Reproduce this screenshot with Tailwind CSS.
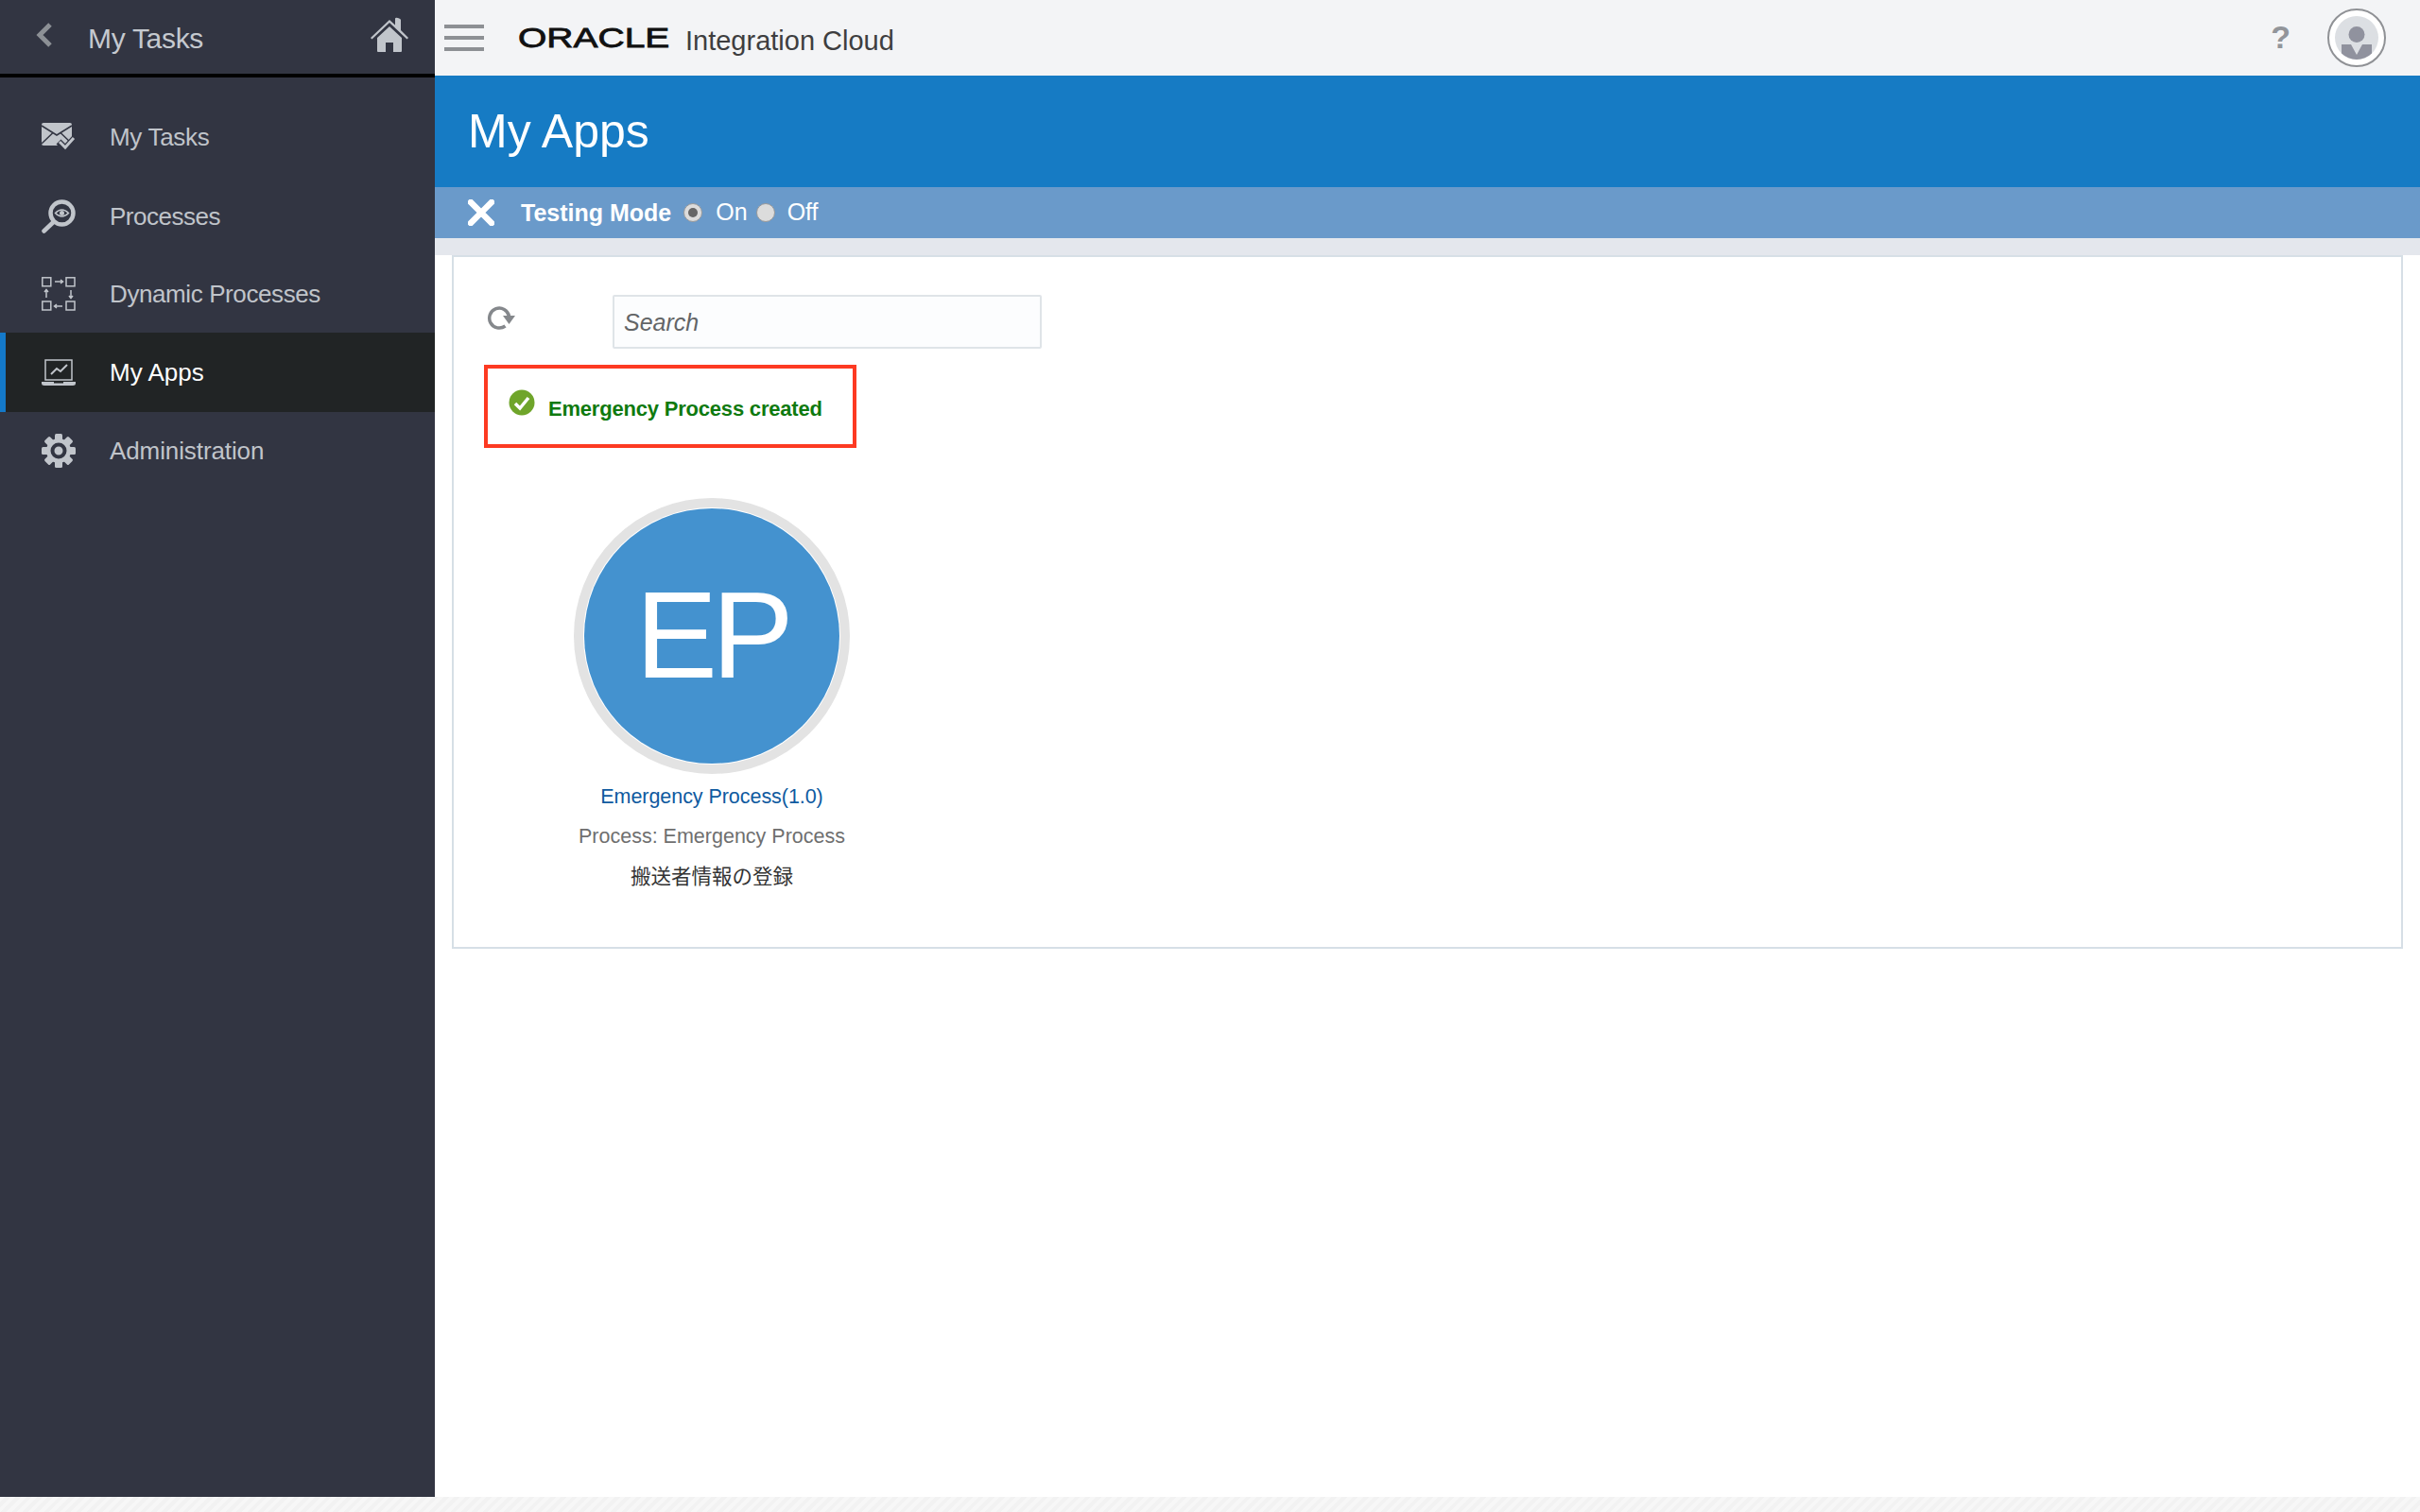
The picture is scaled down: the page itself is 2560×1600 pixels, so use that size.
<!DOCTYPE html>
<html lang="en">
<head>
<meta charset="utf-8">
<script src="https://cdn.jsdelivr.net/npm/@tailwindcss/browser@4"></script>
</head>
<body class="m-0 bg-white font-['Liberation_Sans','Noto_Sans_CJK_JP',sans-serif]">
<div class="flex h-[1600px] w-[2560px] flex-col overflow-hidden">
  <div class="flex h-[1584px] w-full">
    <aside class="flex h-full w-[460px] shrink-0 flex-col bg-[#323542]">
      <div class="flex h-[82px] items-center border-b-[4px] border-black pl-[38px] pr-[28px]">
        <svg class="mb-[5px] h-[26px] w-[18px]" viewBox="0 0 18 26"><path d="M15 2 4 13l11 11" fill="none" stroke="#8c9095" stroke-width="5"/></svg>
        <span class="ml-[37px] mt-[4px] text-[30px] leading-none tracking-[-0.3px] text-[#c5c9cf]">My Tasks</span>
        <svg class="mb-[4px] ml-auto h-[38px] w-[40px]" viewBox="0 0 40 38"><path d="M0 22 20 3l6 5.500V2q0-2 3-1t3 2v11l8 8-1.500 1.500L20 6 1.500 23.500Z M7 22 20 10l13 12v14q0 1-1 1h-8V27h-8v10H8q-1 0-1-1Z" fill="#c1c5cb"/></svg>
      </div>
      <nav class="flex flex-col pt-[21px] text-[26px] leading-none text-[#c0c4ca]">
        <a class="flex h-[84px] items-center pl-[44px]">
          <svg class="h-[32px] w-[36px]" viewBox="0 0 36 32"><rect x="0" y="1" width="32" height="24" rx="2" fill="#c1c5cb"/><path d="M0 4 16 14 32 4M0 23 12 11.500M32 23 20 11.500" fill="none" stroke="#323542" stroke-width="1.500"/><path d="m18 21 7 7 10-11" fill="none" stroke="#323542" stroke-width="7"/><path d="m19 21 6 6 9-10" fill="none" stroke="#c1c5cb" stroke-width="3"/></svg>
          <span class="ml-[36px] tracking-[-0.3px]">My Tasks</span>
        </a>
        <a class="flex h-[83px] items-center pl-[44px]">
          <svg class="h-[36px] w-[36px]" viewBox="0 0 36 36"><circle cx="21.500" cy="14.500" r="12" fill="none" stroke="#c1c5cb" stroke-width="4.500"/><path d="M12.500 24 2.500 33.500" stroke="#c1c5cb" stroke-width="4.500" stroke-linecap="round"/><path d="M14.500 14.500q7-7 14 0q-7 7-14 0Z" fill="none" stroke="#c1c5cb" stroke-width="1.500"/><circle cx="21.500" cy="14.500" r="2.500" fill="#c1c5cb"/></svg>
          <span class="ml-[36px] tracking-[-0.5px]">Processes</span>
        </a>
        <a class="flex h-[82px] items-center pl-[44px]">
          <svg class="h-[36px] w-[36px]" viewBox="0 0 36 36" fill="none" stroke="#c1c5cb" stroke-width="1.500"><rect x=".8" y=".8" width="9" height="9"/><rect x="26" y=".8" width="9" height="9"/><rect x=".8" y="26" width="9" height="9"/><rect x="26" y="26" width="9" height="9"/><path d="M14 5h8M20 3l2.500 2-2.500 2M22 31h-8M16 29l-2.500 2 2.500 2M5 22v-8M3 16l2-2.500L7 16M31 14v8M29 20l2 2.500 2-2.500"/></svg>
          <span class="ml-[36px] tracking-[-0.4px]">Dynamic Processes</span>
        </a>
        <a class="flex h-[84px] items-center border-l-[6px] border-[#1479c9] bg-[#212425] pl-[38px] text-white">
          <svg class="h-[28px] w-[36px]" viewBox="0 0 36 28"><rect x="4" y="1" width="28" height="21" fill="none" stroke="#c1c5cb" stroke-width="1.500"/><path d="m10 16 6-6 4 3 7-7" fill="none" stroke="#c1c5cb" stroke-width="2"/><path d="M0 24h13v1.500h10V24h13v1.500q0 2.500-3 2.500H3q-3 0-3-2.500Z" fill="#c1c5cb"/></svg>
          <span class="ml-[36px]">My Apps</span>
        </a>
        <a class="flex h-[82px] items-center pl-[44px]">
          <svg class="h-[36px] w-[36px]" viewBox="0 0 36 36"><g fill="#c1c5cb"><rect x="14" y="0" width="8" height="36" rx="1.500"/><rect x="14" y="0" width="8" height="36" rx="1.500" transform="rotate(45 18 18)"/><rect x="14" y="0" width="8" height="36" rx="1.500" transform="rotate(90 18 18)"/><rect x="14" y="0" width="8" height="36" rx="1.500" transform="rotate(135 18 18)"/><circle cx="18" cy="18" r="13"/></g><circle cx="18" cy="18" r="6.500" fill="none" stroke="#323542" stroke-width="4"/></svg>
          <span class="ml-[36px] tracking-[-0.1px]">Administration</span>
        </a>
      </nav>
    </aside>
    <main class="flex min-w-0 flex-1 flex-col bg-white">
      <header class="flex h-[80px] items-center bg-[#f3f4f6] pl-[10px] pr-[36px]">
        <div class="flex w-[42px] flex-col gap-[8px]">
          <div class="h-[4px] bg-[#8d9094]"></div>
          <div class="h-[4px] bg-[#8d9094]"></div>
          <div class="h-[4px] bg-[#8d9094]"></div>
        </div>
        <span class="ml-[36px] w-[147px] origin-left scale-x-[1.3] text-[30px] leading-none text-[#111] [-webkit-text-stroke:0.8px_#111]">ORACLE</span>
        <span class="ml-[30px] mt-[6px] text-[29px] leading-none text-[#3e3e40]">Integration Cloud</span>
        <span class="mb-[2px] ml-auto text-[34px] leading-none font-bold text-[#92959a]">?</span>
        <div class="ml-[39px] flex h-[62px] w-[62px] items-center justify-center rounded-full border-2 border-[#8f9195] bg-white">
          <svg class="h-[46px] w-[46px]" viewBox="0 0 46 46"><circle cx="23" cy="23" r="23" fill="#dcdfe3"/><circle cx="23" cy="19.500" r="8.500" fill="#90929e"/><path d="M7 30H17L23 41 29 30H39V39.500A23 23 0 0 1 7 39.500Z" fill="#90929e"/></svg>
        </div>
      </header>
      <div class="flex h-[118px] items-center bg-[#167bc4] pl-[35px] text-[50px] leading-none text-white">My Apps</div>
      <div class="flex h-[54px] items-center bg-[#6a9aca] pl-[35px] text-white">
        <svg class="h-[28px] w-[28px]" viewBox="0 0 28 28"><path d="M3 3 25 25M25 3 3 25" stroke="#fff" stroke-width="6.500" stroke-linecap="round"/></svg>
        <span class="ml-[28px] text-[25px] leading-none font-bold">Testing Mode</span>
        <span class="ml-[13px] mb-[1px] flex h-[20px] w-[20px] items-center justify-center rounded-full border border-[#999] bg-[#dcdcdc]"><span class="h-[10px] w-[10px] rounded-full bg-[#666]"></span></span>
        <span class="ml-[14px] mb-[2px] text-[25px] leading-none">On</span>
        <span class="ml-[9px] mb-[1px] h-[20px] w-[20px] rounded-full border border-[#999] bg-[#dcdcdc]"></span>
        <span class="ml-[13px] mb-[2px] text-[25px] leading-none">Off</span>
      </div>
      <div class="flex-1 bg-white">
        <div class="h-[18px] bg-[#e4e7ed]"></div>
        <section class="ml-[18px] mr-[18px] h-[734px] border-2 border-t-0 border-[#d6dfe6] bg-white pl-[32px] shadow-[inset_0_2px_0_#d6dfe6]">
          <div class="flex items-center pt-[42px]">
            <svg class="mb-[10px] ml-[3px] h-[28px] w-[30px]" viewBox="0 0 30 28"><path d="M19.500 23A10.500 10.500 0 1 1 23.500 12.500" fill="none" stroke="#85888c" stroke-width="3.500"/><path d="M17 12h13l-6.500 9Z" fill="#85888c"/></svg>
            <div class="ml-[103px] flex h-[57px] w-[454px] items-center rounded-[2px] border-2 border-[#dfe4e8] bg-[#fcfdfe] pl-[10px] pt-[2px] text-[25px] leading-none text-[#636567] italic">Search</div>
          </div>
          <div class="mt-[17px] flex h-[88px] w-[394px] items-start border-[4px] border-[#fd3a22] pl-[22px]">
            <svg class="mt-[22px] h-[28px] w-[28px]" viewBox="0 0 28 28"><circle cx="14" cy="14" r="13.500" fill="#6fa52a"/><path d="m7 15 5 5 9-11" fill="none" stroke="#fff" stroke-width="3.500"/></svg>
            <span class="ml-[14px] mt-[32px] text-[22px] leading-none font-bold tracking-[-0.2px] text-[#0f7a0f]">Emergency Process created</span>
          </div>
          <div class="ml-[95px] mt-[53px] flex w-[292px] flex-col items-center">
            <div class="flex h-[292px] w-[292px] items-center justify-center rounded-full border-[10px] border-[#e3e3e3] bg-white">
              <div class="flex h-[270px] w-[270px] items-center justify-center rounded-full bg-[#4492cf] pb-[3px] text-[130px] leading-none tracking-[-6px] text-white">EP</div>
            </div>
            <div class="mt-[11px] whitespace-nowrap text-[21.500px] leading-[26px] tracking-[-0.05px] text-[#0e5aa0]">Emergency Process(1.0)</div>
            <div class="mt-[16px] whitespace-nowrap text-[21.500px] leading-[26px] text-[#6f6f6f]">Process: Emergency Process</div>
            <div class="mt-[17px] whitespace-nowrap text-[21.500px] leading-[26px] text-[#333]">搬送者情報の登録</div>
          </div>
        </section>
      </div>
    </main>
  </div>
  <div class="h-[16px] bg-[#f5f5f5] bg-[repeating-linear-gradient(135deg,#f7f7f7_0,#f7f7f7_4px,#f2f2f2_4px,#f2f2f2_8px)]"></div>
</div>
</body>
</html>
